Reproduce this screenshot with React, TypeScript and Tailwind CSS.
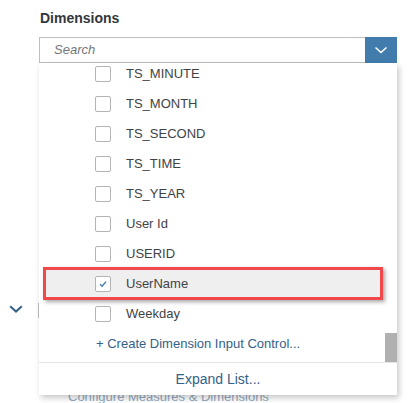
import React from "react";

const items = [
  { label: "TS_MINUTE" },
  { label: "TS_MONTH" },
  { label: "TS_SECOND" },
  { label: "TS_TIME" },
  { label: "TS_YEAR" },
  { label: "User Id" },
  { label: "USERID" },
  { label: "UserName", checked: true },
  { label: "Weekday" },
];

function Checkbox({ checked }: { checked?: boolean }) {
  return (
    <div className="flex items-center justify-center w-4 h-4 rounded-[2px] border border-[#b4b4b4] bg-white shrink-0">
      {checked && (
        <svg width="10" height="10" viewBox="0 0 10 10" fill="none">
          <path d="M2 5.2 L4.1 7.2 L8 2.6" stroke="#427cac" strokeWidth="1.4" />
        </svg>
      )}
    </div>
  );
}

export default function App() {
  return (
    <div
      className="relative w-[410px] h-[403px] overflow-hidden bg-white text-[13px] text-[#32363a]"
      style={{ fontFamily: '"Liberation Sans", Arial, sans-serif' }}
    >
      {/* Label */}
      <div className="pl-10 pt-[10px] h-[27px] text-[14px] font-bold leading-4">Dimensions</div>

      {/* Combobox */}
      <div className="relative ml-[39px] mt-[10px] w-[358px]">
        <div className="flex h-[26px]">
          <div className="flex-1 flex items-center pl-[14px] border border-[#bfbfbf] border-r-0 italic text-[#74777a]">
            Search
          </div>
          <div className="w-[32px] flex items-center justify-center bg-[#427cac]">
            <svg width="14" height="8" viewBox="0 0 14 8" fill="none">
              <path d="M1.5 1.5 L7 6.5 L12.5 1.5" stroke="white" strokeWidth="1.6" />
            </svg>
          </div>
        </div>

        {/* Dropdown panel */}
        <div className="absolute left-0 top-[26px] z-10 w-[358px] h-[332px] flex flex-col bg-white shadow-[2px_3px_6px_rgba(0,0,0,0.22)]">
          <div className="relative h-[299px] overflow-hidden">
            <div className="-mt-[4px] flex flex-col">
              {items.map((it) => (
                <div key={it.label} className="relative flex items-center h-[30px] pl-[56px] gap-[15px]">
                  {it.checked && (
                    <div className="absolute left-[4px] right-[14px] -top-[2px] -bottom-[1px] bg-[#efefef] border-[3px] border-[#f0484b] shadow-[2px_2px_4px_rgba(0,0,0,0.35)]" />
                  )}
                  <div className="relative">
                    <Checkbox checked={it.checked} />
                  </div>
                  <span className="relative text-[#3f4346]">{it.label}</span>
                </div>
              ))}
              <div className="flex items-center h-[29px] pl-[57px] text-[#346187]">
                + Create Dimension Input Control...
              </div>
            </div>
            <div className="absolute right-0 top-[270px] w-[12px] h-[29px] bg-[#b0b0b0]" />
          </div>
          <div className="flex-1 flex items-center justify-center border-t border-[#e5e5e5] text-[14px] text-[#346187]">
            Expand List...
          </div>
        </div>
      </div>

      {/* Content behind the dropdown */}
      <div className="flex items-center mt-[239px] h-[16px]">
        <div className="w-[38px] flex justify-center pr-[9px] pl-[2px] -mt-[3px]">
          <svg width="14" height="8" viewBox="0 0 14 8" fill="none">
            <path d="M1.2 1.2 L7 6.6 L12.8 1.2" stroke="#346187" strokeWidth="2" />
          </svg>
        </div>
        <div className="w-px h-[15px] bg-[#bfbfbf]" />
      </div>
      <div className="pl-[68px] mt-[71px] text-[#93a9c0] leading-4">Configure Measures &amp; Dimensions</div>
    </div>
  );
}
